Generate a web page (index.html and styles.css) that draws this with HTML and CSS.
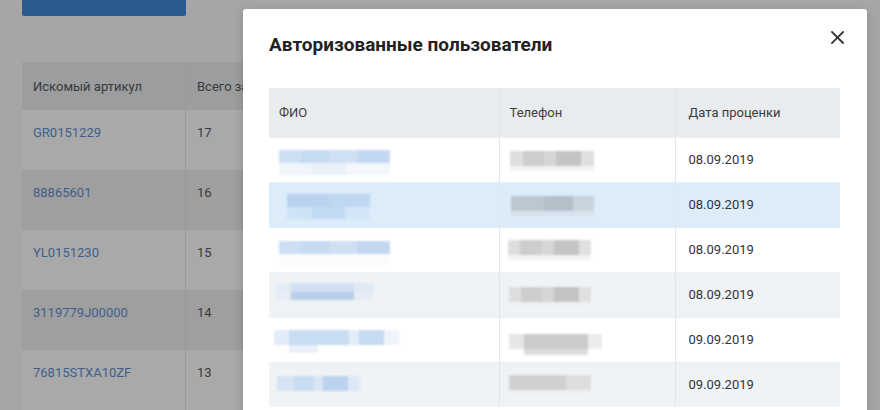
FILE: index.html
```html
<!DOCTYPE html>
<html lang="ru">
<head>
<meta charset="utf-8">
<title>Авторизованные пользователи</title>
<link rel="stylesheet" href="styles.css">
</head>
<body>
<div class="page">
  <div class="btn"></div>
  <table class="items">
    <thead>
      <tr><th class="c1">Искомый артикул</th><th class="c2">Всего запросов</th></tr>
    </thead>
    <tbody>
      <tr><td class="c1"><a>GR0151229</a></td><td class="c2">17</td></tr>
      <tr class="alt"><td class="c1"><a>88865601</a></td><td class="c2">16</td></tr>
      <tr><td class="c1"><a>YL0151230</a></td><td class="c2">15</td></tr>
      <tr class="alt"><td class="c1"><a>3119779J00000</a></td><td class="c2">14</td></tr>
      <tr><td class="c1"><a>76815STXA10ZF</a></td><td class="c2">13</td></tr>
    </tbody>
  </table>
</div>

<div class="modal">
  <div class="modal-head">
    <h2 class="modal-title">Авторизованные пользователи</h2>
    <button class="close" aria-label="Закрыть">
      <svg width="13" height="13" viewBox="0 0 13 13"><path d="M1 1L12 12M12 1L1 12" stroke="#333" stroke-width="1.8" stroke-linecap="square"/></svg>
    </button>
  </div>
  <table class="users">
    <thead>
      <tr><th class="u1">ФИО</th><th class="u2">Телефон</th><th class="u3">Дата проценки</th></tr>
    </thead>
    <tbody>
      <tr>
        <td><div class="nm n1"><i class="l1"></i><i class="l2"></i></div></td>
        <td><div class="ph p1"><i class="l1"></i><i class="l2"></i></div></td>
        <td class="date">08.09.2019</td>
      </tr>
      <tr class="hover">
        <td><div class="nm n2"><i class="l1"></i><i class="l2"></i></div></td>
        <td><div class="ph p2"><i class="l1"></i><i class="l2"></i></div></td>
        <td class="date">08.09.2019</td>
      </tr>
      <tr>
        <td><div class="nm n3"><i class="l1"></i><i class="l2"></i></div></td>
        <td><div class="ph p3"><i class="l1"></i><i class="l2"></i></div></td>
        <td class="date">08.09.2019</td>
      </tr>
      <tr class="stripe">
        <td><div class="nm n4"><i class="l1"></i><i class="l2"></i></div></td>
        <td><div class="ph p4"><i class="l1"></i><i class="l2"></i></div></td>
        <td class="date">08.09.2019</td>
      </tr>
      <tr>
        <td><div class="nm n5"><i class="l1"></i><i class="l2"></i></div></td>
        <td><div class="ph p5"><i class="l1"></i><i class="l2"></i></div></td>
        <td class="date">09.09.2019</td>
      </tr>
      <tr class="stripe">
        <td><div class="nm n6"><i class="l1"></i><i class="l2"></i></div></td>
        <td><div class="ph p6"><i class="l1"></i><i class="l2"></i></div></td>
        <td class="date">09.09.2019</td>
      </tr>
    </tbody>
  </table>
</div>
</body>
</html>
```

FILE: styles.css
```css
html, body {
  margin: 0;
  padding: 0;
}
body {
  width: 880px;
  height: 410px;
  overflow: hidden;
  background: #a6a6a6;
  font-family: Roboto, "Noto Sans", "Liberation Sans", sans-serif;
  position: relative;
}

/* background page (under overlay) */
.page {
  padding-left: 22px;
}
.btn {
  width: 164px;
  height: 16px;
  background: #2c5a90;
  border-radius: 0 0 2px 2px;
}
.items {
  margin-top: 46px;
  border-collapse: collapse;
  font-size: 13px;
  color: #3a3a3a;
}
.items th {
  height: 48px;
  padding: 0 11px;
  text-align: left;
  font-weight: 400;
  background: #9b9d9f;
  color: #3a3a3a;
}
.items td {
  height: 60px;
  padding: 15px 11px 0;
  vertical-align: top;
  box-sizing: border-box;
  background: #a9a9a9;
}
.items tr.alt td {
  background: #9f9f9f;
}
.items .c1 {
  width: 141px;
  border-right: 1px solid #9a9a9a;
}
.items .c2 {
  width: 200px;
}
.items a {
  color: #3e5f8c;
  text-decoration: none;
}

/* modal */
.modal {
  position: absolute;
  left: 243px;
  top: 9px;
  width: 624px;
  height: 420px;
  box-sizing: border-box;
  background: #fff;
  border-radius: 3px;
  padding: 0 27px 0 26px;
  box-shadow: 0 2px 10px rgba(0, 0, 0, 0.18);
}
.modal-head {
  display: flex;
  justify-content: space-between;
  align-items: flex-start;
  padding-top: 24px;
}
.modal-title {
  margin: 0;
  font-size: 19px;
  line-height: 24px;
  font-weight: 700;
  color: #222;
}
.close {
  border: 0;
  background: none;
  padding: 0;
  margin: -2px -4px 0 0;
  width: 13px;
  height: 13px;
  display: flex;
}

.users {
  margin-top: 31px;
  width: 571px;
  border-collapse: collapse;
  table-layout: fixed;
  font-size: 13px;
  color: #333;
}
.users th {
  box-sizing: border-box;
  height: 49px;
  background: #e8ecef;
  font-weight: 400;
  text-align: left;
  color: #3c3c3c;
  padding: 0 10px;
}
.users td {
  height: 45px;
  padding: 0 10px;
  box-sizing: border-box;
  vertical-align: top;
  border-top: 1px solid #eceff1;
}
.users th + th,
.users td + td {
  border-left: 1px solid #e3e7ea;
}
.users .u1 { width: 230px; }
.users .u2 { width: 176px; }
.users .u3 { width: 165px; }
.users th.u3,
.users td.date {
  padding-left: 13px;
}
.users td.date {
  vertical-align: middle;
}
.users tr.hover td {
  background: #dcecf9;
}
.users tr.stripe td {
  background: #f0f3f5;
}

/* blurred personal data */
.nm, .ph {
  display: flex;
  flex-direction: column;
  filter: blur(1.2px);
}
.nm i, .ph i {
  display: block;
}
.nm .l1 {
  height: 13px;
  background: linear-gradient(90deg, #cddff3 0 20%, #c6daf1 20% 45%, #cfe0f3 45% 70%, #c3d8f0 70% 100%);
}
.nm .l2 {
  height: 12px;
  background: linear-gradient(90deg, #f1f5fb 0 30%, #e9f0f8 30% 60%, #f3f6fb 60% 100%);
}
.ph .l1 {
  height: 15px;
  background: linear-gradient(90deg, #dedede 0 15%, #cdcdcd 15% 40%, #d6d6d6 40% 55%, #c4c4c4 55% 85%, #e0e0e0 85% 100%);
}
.ph .l2 {
  height: 5px;
  background: #f3f3f3;
}

.n1 { margin: 12px 0 0 0; width: 111px; }
.p1 { margin: 13px 0 0 0; width: 84px; }

.n2 { margin: 11px 0 0 8px; width: 83px; }
.n2 .l1 { background: linear-gradient(90deg, #b9d3ef 0 50%, #bfd7f0 50% 100%); }
.n2 .l2 { background: linear-gradient(90deg, #cfe3f6 0 30%, #c2daf2 30% 70%, #d4e6f7 70% 100%); }
.p2 { margin: 13px 0 0 1px; width: 83px; }
.p2 .l1 { background: linear-gradient(90deg, #bdc7d0 0 40%, #b4bfc9 40% 75%, #c9d3dc 75% 100%); }
.p2 .l2 { background: #d6e3ee; }

.n3 { margin: 13px 0 0 0; width: 111px; }
.n3 .l2 { background: #fafcfe; }
.p3 { margin: 12px 0 0 -2px; width: 83px; }

.n4 { margin: 10px 0 0 -3px; width: 98px; }
.n4 .l1 { height: 9px; background: linear-gradient(90deg, #e3ecf6 0 15%, #cfe0f3 15% 80%, #e0eaf5 80% 100%); }
.n4 .l2 { height: 8px; background: linear-gradient(90deg, #e6edf5 0 15%, #b9cfea 15% 80%, #e6edf5 80% 100%); }
.p4 { margin: 14px 0 0 -1px; width: 82px; }
.p4 .l2 { background: #eef1f3; }

.n5 { margin: 12px 0 0 -5px; width: 125px; }
.n5 .l1 { height: 15px; background: linear-gradient(90deg, #e2ecf8 0 12%, #c8dcf2 12% 60%, #e3edf8 60% 68%, #c6daf1 68% 88%, #eef4fb 88% 100%); }
.n5 .l2 { height: 8px; background: linear-gradient(90deg, #fff 0 12%, #eaf1f9 12% 35%, #fff 35% 100%); }
.p5 { margin: 16px 0 0 -1px; width: 93px; }
.p5 .l1 { background: linear-gradient(90deg, #e6e6e6 0 16%, #cbcbcb 16% 85%, #ececec 85% 100%); }
.p5 .l2 { height: 6px; background: linear-gradient(90deg, #fff 0 16%, #dcdcdc 16% 85%, #fff 85% 100%); }

.n6 { margin: 13px 0 0 -2px; width: 83px; }
.n6 .l1 { height: 15px; background: linear-gradient(90deg, #d5e3f3 0 20%, #c8dbf1 20% 45%, #d9e6f4 45% 55%, #bcd3ef 55% 85%, #dce8f5 85% 100%); }
.n6 .l2 { height: 6px; background: #eef3f8; }
.p6 { margin: 12px 0 0 -1px; width: 82px; }
.p6 .l1 { background: linear-gradient(90deg, #d0d0d0 0 70%, #dedede 70% 100%); }
.p6 .l2 { background: #eef0f1; }
```
